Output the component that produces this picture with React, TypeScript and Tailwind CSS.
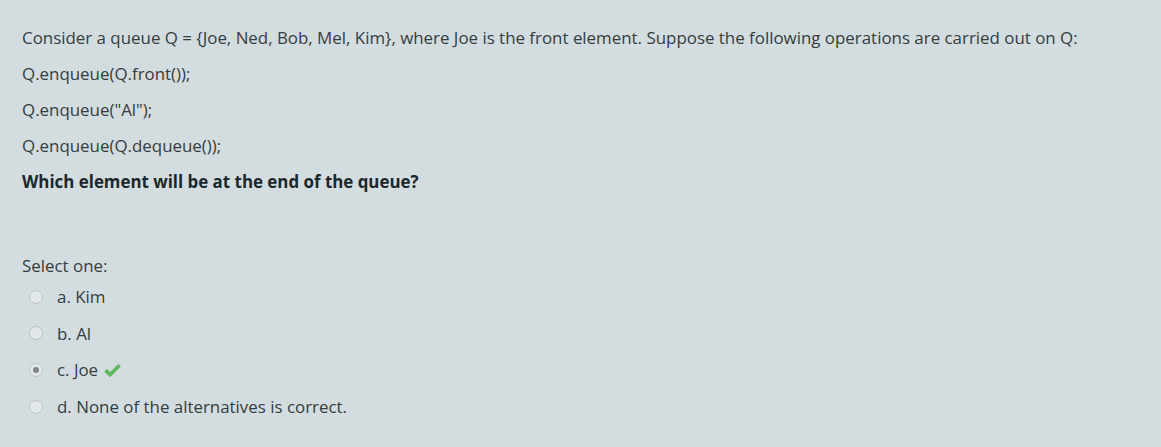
export default function App() {
  const options = [
    { label: 'a. Kim', checked: false },
    { label: 'b. Al', checked: false },
    { label: 'c. Joe', checked: true, correct: true },
    { label: 'd. None of the alternatives is correct.', checked: false },
  ];

  return (
    <div
      className="w-[1161px] h-[447px] bg-[#d3dcdf] text-[#343e41] text-[16.9px] px-[22px] pt-[27px]"
      style={{ fontFamily: '"Open Sans", "Noto Sans", sans-serif' }}
    >
      <div className="flex flex-col gap-[15px] leading-[21px]">
        <p>Consider a queue Q = {'{'}Joe, Ned, Bob, Mel, Kim{'}'}, where Joe is the front element. Suppose the following operations are carried out on Q:</p>
        <p>Q.enqueue(Q.front());</p>
        <p>Q.enqueue("Al");</p>
        <p>Q.enqueue(Q.dequeue());</p>
        <p className="font-bold text-[#1b282c]">Which element will be at the end of the queue?</p>
      </div>

      <div className="mt-[63px]">
        <p className="leading-[21px]">Select one:</p>
        <div className="flex flex-col gap-[15.7px] mt-[10px] pl-[7px]">
          {options.map((o) => (
            <div key={o.label} className="flex items-center h-[21px]">
              <span className="w-[14px] h-[14px] rounded-full border border-[#bcc3c5] bg-[#e2e7e9] flex items-center justify-center">
                {o.checked && <span className="w-[6px] h-[6px] rounded-full bg-[#7f8587]" />}
              </span>
              <span className="ml-[14px]">{o.label}</span>
              {o.correct && (
                <svg className="ml-[6px]" width="17" height="14" viewBox="0 0 17 14">
                  <path d="M1.5 7.2 L6 11.7 L15.5 2.2" fill="none" stroke="#5cb85c" strokeWidth="3.6" />
                </svg>
              )}
            </div>
          ))}
        </div>
      </div>
    </div>
  );
}
